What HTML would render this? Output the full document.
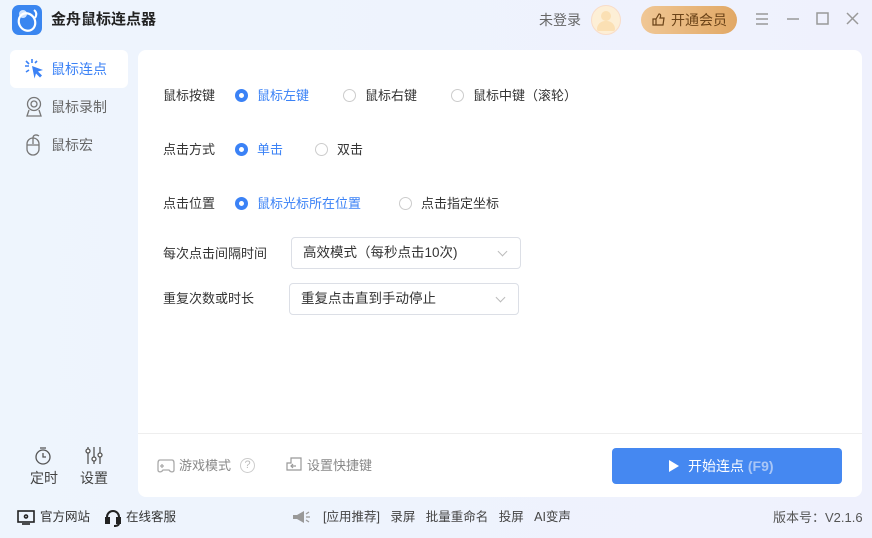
<!DOCTYPE html>
<html><head><meta charset="utf-8"><style>
*{margin:0;padding:0;box-sizing:border-box}
body{width:872px;height:538px;overflow:hidden;background:linear-gradient(90deg,#eef5fd,#eff1fd);font-family:"Liberation Sans","Noto Sans CJK SC",sans-serif;font-size:13px;line-height:1.2;color:#333;position:relative}
.a{position:absolute;white-space:nowrap}
.radio{position:absolute;width:13px;height:13px;border-radius:50%;border:1px solid #ccc;background:#fff}
.radio.on{border:4px solid #3b82f6}
.g{color:#666}
.sel{position:absolute;width:230px;height:32px;border:1px solid #dcdfe6;border-radius:4px;background:#fff;padding-left:11px;line-height:30px;font-size:13.5px}
.sel:after{content:"";position:absolute;right:14px;top:10px;width:6px;height:6px;border-right:1px solid #bbb;border-bottom:1px solid #bbb;transform:rotate(45deg)}
</style></head><body>
<div class="a" style="left:12px;top:5px;width:30px;height:30px;border-radius:7px;background:#3a86f0"></div>
<svg class="a" style="left:12px;top:5px" width="30" height="30"><circle cx="11" cy="9" r="4" fill="#cfe3ff"/><ellipse cx="15" cy="17" rx="8" ry="9" fill="none" stroke="#fff" stroke-width="2.2" transform="rotate(-30 15 17)"/><path d="M22 5 q4 3 1 8" stroke="#fff" stroke-width="2" fill="none"/></svg>
<div class="a" style="left:51px;top:11px;font-size:15px;font-weight:bold;color:#222">金舟鼠标连点器</div>
<div class="a g" style="left:539px;top:12px;font-size:14px">未登录</div>
<div class="a" style="left:591px;top:5px;width:30px;height:30px;border-radius:50%;background:#fdefd6;border:1px solid #f8dcc8"></div>
<div class="a" style="left:601px;top:11px;width:10px;height:10px;border-radius:50%;background:#fbe0b4"></div>
<div class="a" style="left:597px;top:21px;width:18px;height:10px;border-radius:9px 9px 2px 2px;background:#fbe0b4"></div>
<div class="a" style="left:641px;top:6px;width:96px;height:28px;border-radius:14px;background:linear-gradient(90deg,#f0c795,#e1a865);color:#6b4318;font-size:14px;line-height:28px;padding-left:30px">开通会员</div>
<svg class="a" style="left:651px;top:12px" width="15" height="15"><path d="M2 7h3v6H2zM5 7l3-5c2 0 2 2 1 4h4l-1 7H5" fill="none" stroke="#6b4318" stroke-width="1.2"/></svg>
<svg class="a" style="left:754px;top:12px" width="110" height="16"><g stroke="#999" stroke-width="1.5" fill="none"><path d="M2 2h12M2 7h12M2 12h12"/><path d="M33 7h12"/><rect x="63" y="1" width="11" height="11"/><path d="M93 1l11 11M104 1l-11 11"/></g></svg>
<div class="a" style="left:10px;top:50px;width:118px;height:38px;background:#fff;border-radius:6px"></div>
<svg class="a" style="left:23px;top:58px" width="22" height="22"><g stroke="#3b82f6" stroke-width="1.6"><path d="M9 1v4M2 8h4M3 3l3 3M14 3l-2 2M3 14l3-2"/></g><path d="M9 8l11 4-5 1.5 4 4-2 2-4-4-1.5 5z" fill="#3b82f6"/></svg>
<div class="a" style="left:51px;top:61px;font-size:14px;color:#3b82f6">鼠标连点</div>
<svg class="a" style="left:24px;top:96px" width="20" height="22"><g fill="none" stroke="#777" stroke-width="1.3"><circle cx="10" cy="8" r="6.5"/><circle cx="10" cy="8" r="3"/><path d="M5 14l-2 6h14l-2-6"/></g></svg>
<div class="a g" style="left:51px;top:99px;font-size:14px">鼠标录制</div>
<svg class="a" style="left:25px;top:133px" width="18" height="24"><g fill="none" stroke="#777" stroke-width="1.3"><rect x="2" y="5" width="12" height="17" rx="6"/><path d="M8 5v6M2 12h12M8 5c0-3 3-4 6-2"/></g></svg>
<div class="a g" style="left:51px;top:137px;font-size:14px">鼠标宏</div>
<svg class="a" style="left:34px;top:446px" width="18" height="20"><g fill="none" stroke="#555" stroke-width="1.3"><circle cx="9" cy="11" r="7"/><path d="M9 7v4h3M6 2h6"/></g></svg>
<div class="a" style="left:30px;top:470px;font-size:14px;color:#444">定时</div>
<svg class="a" style="left:85px;top:446px" width="18" height="20"><g fill="none" stroke="#555" stroke-width="1.3"><path d="M3 1v17M9 1v17M15 1v17"/><circle cx="3" cy="5" r="2" fill="#fff"/><circle cx="9" cy="13" r="2" fill="#fff"/><circle cx="15" cy="9" r="2" fill="#fff"/></g></svg>
<div class="a" style="left:80px;top:470px;font-size:14px;color:#444">设置</div>
<div class="a" style="left:138px;top:50px;width:724px;height:447px;background:#fff;border-radius:8px"></div>
<div class="a" style="left:138px;top:433px;width:724px;height:1px;background:#eee"></div>
<div class="a" style="left:163px;top:88px">鼠标按键</div>
<div class="radio on" style="left:235px;top:89px"></div><div class="a" style="left:257px;top:88px;color:#3b82f6">鼠标左键</div>
<div class="radio" style="left:343px;top:89px"></div><div class="a" style="left:365px;top:88px">鼠标右键</div>
<div class="radio" style="left:451px;top:89px"></div><div class="a" style="left:473px;top:88px">鼠标中键（滚轮）</div>
<div class="a" style="left:163px;top:142px">点击方式</div>
<div class="radio on" style="left:235px;top:143px"></div><div class="a" style="left:257px;top:142px;color:#3b82f6">单击</div>
<div class="radio" style="left:315px;top:143px"></div><div class="a" style="left:337px;top:142px">双击</div>
<div class="a" style="left:163px;top:196px">点击位置</div>
<div class="radio on" style="left:235px;top:197px"></div><div class="a" style="left:257px;top:196px;color:#3b82f6">鼠标光标所在位置</div>
<div class="radio" style="left:399px;top:197px"></div><div class="a" style="left:421px;top:196px">点击指定坐标</div>
<div class="a" style="left:163px;top:246px">每次点击间隔时间</div>
<div class="sel" style="left:291px;top:237px">高效模式（每秒点击10次)</div>
<div class="a" style="left:163px;top:291px">重复次数或时长</div>
<div class="sel" style="left:289px;top:283px">重复点击直到手动停止</div>
<svg class="a" style="left:157px;top:458px" width="18" height="16"><g fill="none" stroke="#aaa" stroke-width="1.3"><path d="M3 2h12c2 0 2 2 2 4v6c0 2-3 3-5 0H6c-2 3-5 2-5 0V6c0-2 0-4 2-4z"/><path d="M5 6v4M3 8h4"/></g></svg>
<div class="a" style="left:179px;top:458px;color:#888">游戏模式</div>
<div class="a" style="left:240px;top:458px;width:15px;height:15px;border-radius:50%;border:1px solid #ccc;color:#bbb;font-size:11px;text-align:center;line-height:13px">?</div>
<svg class="a" style="left:286px;top:457px" width="16" height="16"><g fill="none" stroke="#999" stroke-width="1.2"><path d="M5 1h10v12H1V6h4z"/><path d="M5 9h5M7 7l-2 2 2 2"/></g></svg>
<div class="a" style="left:307px;top:458px;color:#888">设置快捷键</div>
<div class="a" style="left:612px;top:448px;width:230px;height:36px;background:#4588f1;border-radius:4px"></div>
<svg class="a" style="left:668px;top:459px" width="12" height="14"><path d="M1 1l10 6-10 6z" fill="#fff"/></svg>
<div class="a" style="left:688px;top:458px;color:#fff;font-size:14px">开始连点 <span style="color:#a9c6f6;font-weight:bold">(F9)</span></div>
<svg class="a" style="left:17px;top:510px" width="18" height="16"><g fill="none" stroke="#222" stroke-width="1.6"><rect x="1" y="1" width="16" height="11"/><path d="M5 14h8"/><circle cx="9" cy="6.5" r="1.5"/></g></svg>
<div class="a" style="left:40px;top:510px;font-size:12.5px">官方网站</div>
<svg class="a" style="left:105px;top:509px" width="16" height="18"><g fill="none" stroke="#222" stroke-width="2"><path d="M2 11V8a6 6 0 0112 0v3"/><rect x="1" y="9" width="3" height="5" fill="#222"/><rect x="12" y="9" width="3" height="5" fill="#222"/><path d="M14 14c0 2-2 3-5 3"/></g></svg>
<div class="a" style="left:126px;top:510px;font-size:12.5px">在线客服</div>
<svg class="a" style="left:291px;top:509px" width="20" height="16"><path d="M2 6h4l7-4v12l-7-4H2z" fill="#999"/><path d="M15 5l3-2M15 8h4M15 11l3 2" stroke="#999" stroke-width="1.3"/></svg>
<div class="a" style="left:323px;top:510px;font-size:12.5px;color:#444">[应用推荐]&nbsp;&nbsp;&nbsp;录屏&nbsp;&nbsp;&nbsp;批量重命名&nbsp;&nbsp;&nbsp;投屏&nbsp;&nbsp;&nbsp;AI变声</div>
<div class="a" style="left:773px;top:510px;font-size:13px;color:#555">版本号：V2.1.6</div>
</body></html>
